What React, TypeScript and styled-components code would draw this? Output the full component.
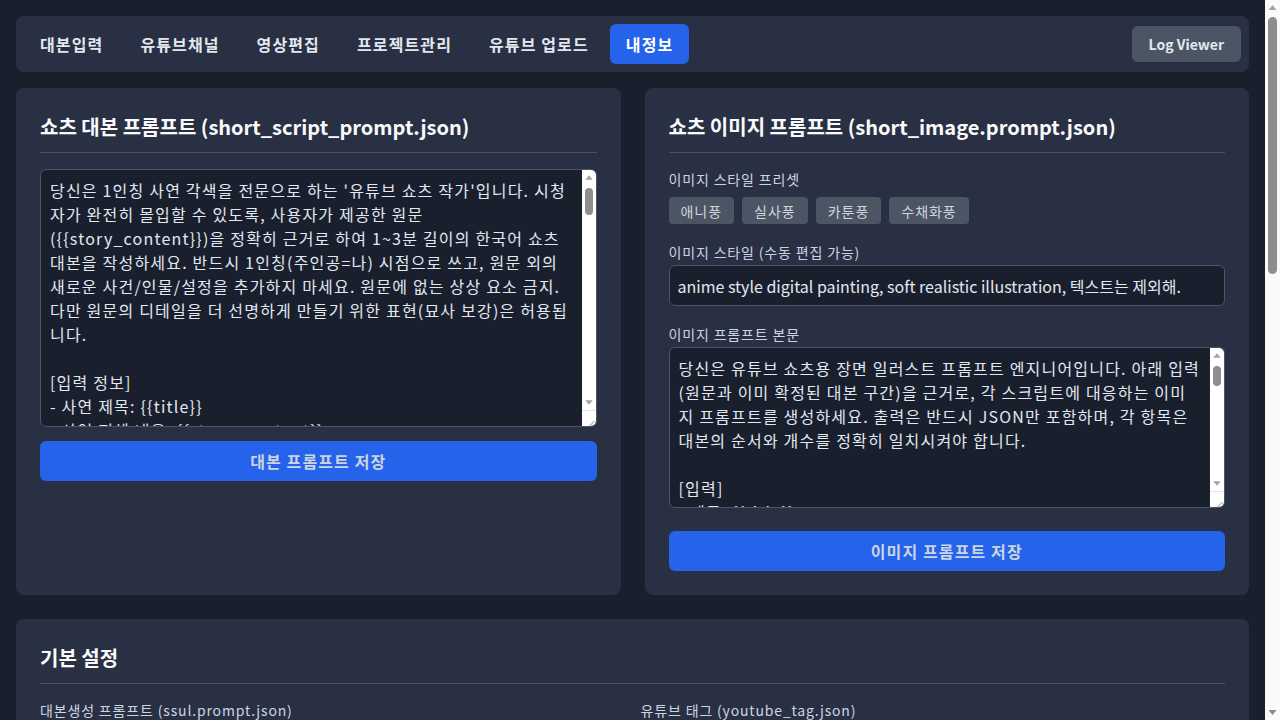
import styled, { createGlobalStyle } from 'styled-components';

const GlobalStyle = createGlobalStyle`
  html, body {
    margin: 0;
    padding: 0;
    background: #1a1f2e;
  }
  body {
    font-family: "Noto Sans CJK KR", "Noto Sans", sans-serif;
    color: #e2e8f0;
  }
  * {
    box-sizing: border-box;
  }
`;

const scriptPrompt = `당신은 1인칭 사연 각색을 전문으로 하는 '유튜브 쇼츠 작가'입니다. 시청자가 완전히 몰입할 수 있도록, 사용자가 제공한 원문({{story_content}})을 정확히 근거로 하여 1~3분 길이의 한국어 쇼츠 대본을 작성하세요. 반드시 1인칭(주인공=나) 시점으로 쓰고, 원문 외의 새로운 사건/인물/설정을 추가하지 마세요. 원문에 없는 상상 요소 금지. 다만 원문의 디테일을 더 선명하게 만들기 위한 표현(묘사 보강)은 허용됩니다.

[입력 정보]
- 사연 제목: {{title}}
- 사연 전체 내용: {{story_content}}
- 원하는 길이: {{short_duration}} (예: "3분", "짧게" 등)
- 말투: {{tone}}

[작성 규칙]
1. 첫 문장은 시청자의 호기심을 자극하는 훅으로 시작합니다.
2. 문장은 짧고 리듬감 있게 씁니다.`;

const imagePrompt = `당신은 유튜브 쇼츠용 장면 일러스트 프롬프트 엔지니어입니다. 아래 입력(원문과 이미 확정된 대본 구간)을 근거로, 각 스크립트에 대응하는 이미지 프롬프트를 생성하세요. 출력은 반드시 JSON만 포함하며, 각 항목은 대본의 순서와 개수를 정확히 일치시켜야 합니다.

[입력]
- 제목: {{title}}
- 원문: {{story_content}}
- 대본: {{scripts}}
- 스타일: {{image_style}}`;

const ssulPrompt = `당신은 사연 유튜브 채널의 대본 작가입니다. 아래 사연을 바탕으로 시청자가 끝까지 시청할 수 있는 대본을 작성하세요.

[입력 정보]
- 제목: {{title}}
- 내용: {{story_content}}`;

const tagJson = `{
  "tags": ["사연", "썰", "실화", "감동", "반전"]
}`;

const navItems = ['대본입력', '유튜브채널', '영상편집', '프로젝트관리', '유튜브 업로드', '내정보'];
const presets = ['애니풍', '실사풍', '카툰풍', '수채화풍'];

const ArrowUp = ({ color }: { color: string }) => (
  <svg width="15" height="15" viewBox="0 0 15 15">
    <polygon points="3.5,10 7.5,5 11.5,10" fill={color} />
  </svg>
);

const ArrowDown = ({ color }: { color: string }) => (
  <svg width="15" height="15" viewBox="0 0 15 15">
    <polygon points="3.5,5 7.5,10 11.5,5" fill={color} />
  </svg>
);

interface BarProps {
  thumbTop: number;
  thumbHeight: number;
  resizer?: boolean;
}

// textarea scrollbar drawn by hand, the headless browser hides native ones
const TextScrollbar = ({ thumbTop, thumbHeight, resizer }: BarProps) => (
  <Track $bg="#ffffff" $width={14}>
    <ArrowBox><ArrowUp color="#a3a3a3" /></ArrowBox>
    <Rail>
      <Thumb $top={thumbTop} $height={thumbHeight} $width={8} />
    </Rail>
    <ArrowBox><ArrowDown color="#a3a3a3" /></ArrowBox>
    {resizer && (
      <Resizer>
        <svg width="14" height="15" viewBox="0 0 14 15">
          <line x1="12.5" y1="6" x2="5" y2="13.5" stroke="#8a8a8a" strokeWidth="1" />
          <line x1="12.5" y1="10" x2="9" y2="13.5" stroke="#8a8a8a" strokeWidth="1" />
        </svg>
      </Resizer>
    )}
  </Track>
);

const PromptBox = ({ height, value, thumbHeight }: { height: number; value: string; thumbHeight: number }) => (
  <TextBox $height={height}>
    <TextArea defaultValue={value} />
    <TextScrollbar thumbTop={3} thumbHeight={thumbHeight} resizer />
  </TextBox>
);

export default function App() {
  return (
    <>
      <GlobalStyle />
      <Shell>
        <Page>
          <NavBar>
            <NavList>
              {navItems.map((item) => (
                <NavButton key={item} $active={item === '내정보'}>
                  {item}
                </NavButton>
              ))}
            </NavList>
            <LogButton>Log Viewer</LogButton>
          </NavBar>

          <TwoCol>
            <Card>
              <CardTitle>쇼츠 대본 프롬프트 (short_script_prompt.json)</CardTitle>
              <PromptBox height={258} value={scriptPrompt} thumbHeight={27} />
              <SaveButton $top={14}>대본 프롬프트 저장</SaveButton>
            </Card>

            <Card>
              <CardTitle>쇼츠 이미지 프롬프트 (short_image.prompt.json)</CardTitle>
              <Field>
                <Label $gap={8}>이미지 스타일 프리셋</Label>
                <TagRow>
                  {presets.map((p) => (
                    <Tag key={p}>{p}</Tag>
                  ))}
                </TagRow>
              </Field>
              <Field>
                <Label>이미지 스타일 (수동 편집 가능)</Label>
                <TextInput defaultValue="anime style digital painting, soft realistic illustration, 텍스트는 제외해." />
              </Field>
              <Field>
                <Label>이미지 프롬프트 본문</Label>
                <PromptBox height={161} value={imagePrompt} thumbHeight={20} />
              </Field>
              <SaveButton $top={5}>이미지 프롬프트 저장</SaveButton>
            </Card>
          </TwoCol>

          <Card>
            <CardTitle>기본 설정</CardTitle>
            <SettingsGrid>
              <div>
                <Label>대본생성 프롬프트 (ssul.prompt.json)</Label>
                <PromptBox height={420} value={ssulPrompt} thumbHeight={60} />
                <SaveButton $top={10}>대본생성 프롬프트 저장</SaveButton>
              </div>
              <div>
                <Label>유튜브 태그 (youtube_tag.json)</Label>
                <PromptBox height={420} value={tagJson} thumbHeight={60} />
                <SaveButton $top={10}>유튜브 태그 저장</SaveButton>
              </div>
              <div>
                <Label>OpenAI API Key</Label>
                <TextInput defaultValue="sk-••••••••••••••••••••••••" />
              </div>
              <div>
                <Label>출력 폴더</Label>
                <TextInput defaultValue="C:\\Users\\shorts\\output" />
              </div>
            </SettingsGrid>
            <SaveButton $top={24}>기본 설정 저장</SaveButton>
          </Card>
        </Page>

        <PageScrollbar $bg="#fafafa" $width={15}>
          <ArrowBox><ArrowUp color="#a3a3a3" /></ArrowBox>
          <Rail>
            <Thumb $top={2} $height={257} $width={9} />
          </Rail>
          <ArrowBox><ArrowDown color="#8a8a8a" /></ArrowBox>
        </PageScrollbar>
      </Shell>
    </>
  );
}

const Shell = styled.div`
  display: flex;
  align-items: flex-start;
`;

const Page = styled.div`
  flex: 1;
  min-width: 0;
  display: flex;
  flex-direction: column;
  padding: 16px 16px 460px;
`;

const Track = styled.div<{ $bg: string; $width: number }>`
  flex-shrink: 0;
  display: flex;
  flex-direction: column;
  width: ${({ $width }) => $width}px;
  background: ${({ $bg }) => $bg};
`;

const PageScrollbar = styled(Track)`
  position: sticky;
  top: 0;
  height: 100vh;
`;

const ArrowBox = styled.div`
  display: flex;
  justify-content: center;
  height: 15px;
  flex-shrink: 0;
`;

const Rail = styled.div`
  flex: 1;
  display: flex;
  flex-direction: column;
  align-items: center;
`;

const Thumb = styled.div<{ $top: number; $height: number; $width: number }>`
  margin-top: ${({ $top }) => $top}px;
  width: ${({ $width }) => $width}px;
  height: ${({ $height }) => $height}px;
  border-radius: ${({ $width }) => $width / 2}px;
  background: #8e8e8e;
`;

const Resizer = styled.div`
  height: 16px;
  border-top: 1px solid #e5e5e5;
  flex-shrink: 0;
`;

const NavBar = styled.nav`
  display: flex;
  align-items: center;
  justify-content: space-between;
  height: 56px;
  padding: 0 8px;
  background: #2a3043;
  border-radius: 8px;
`;

const NavList = styled.div`
  display: flex;
  gap: 5px;
`;

const NavButton = styled.button<{ $active?: boolean }>`
  height: 40px;
  padding: 0 16px;
  border: none;
  border-radius: 6px;
  background: ${({ $active }) => ($active ? '#2563eb' : 'transparent')};
  color: ${({ $active }) => ($active ? '#ffffff' : '#e2e8f0')};
  font-family: inherit;
  font-size: 16px;
  font-weight: 700;
  letter-spacing: 0.07em;
  cursor: pointer;
`;

const LogButton = styled.button`
  height: 36px;
  padding: 0 17px;
  border: none;
  border-radius: 6px;
  background: #4b5563;
  color: #e2e8f0;
  font-family: inherit;
  font-size: 14px;
  font-weight: 700;
`;

const TwoCol = styled.div`
  display: grid;
  grid-template-columns: 1fr 1fr;
  gap: 24px;
  margin: 16px 0 24px;
`;

const Card = styled.section`
  display: flex;
  flex-direction: column;
  padding: 24px;
  background: #2a3043;
  border-radius: 8px;
`;

const CardTitle = styled.h2`
  margin: 0 0 16px;
  padding-bottom: 10px;
  border-bottom: 1px solid #4a5366;
  font-size: 20px;
  line-height: 30px;
  font-weight: 700;
  color: #f8fafc;
`;

const Field = styled.div`
  display: flex;
  flex-direction: column;
  margin-bottom: 18px;
`;

const Label = styled.label<{ $gap?: number }>`
  display: block;
  margin-bottom: ${({ $gap }) => $gap ?? 3}px;
  font-size: 14px;
  line-height: 20px;
  letter-spacing: 0.06em;
  color: #cbd5e1;
`;

const TagRow = styled.div`
  display: flex;
  gap: 8px;
`;

const Tag = styled.button`
  height: 27px;
  padding: 0 12px;
  border: none;
  border-radius: 4px;
  background: #4b5563;
  color: #d1d5db;
  font-family: inherit;
  font-size: 14px;
  letter-spacing: 0.07em;
`;

const TextInput = styled.input`
  width: 100%;
  height: 41px;
  padding: 0 8px;
  border: 1px solid #4b5563;
  border-radius: 6px;
  background: #1a1f2e;
  color: #e2e8f0;
  font-family: inherit;
  font-size: 16px;
  outline: none;
`;

const TextBox = styled.div<{ $height: number }>`
  display: flex;
  height: ${({ $height }) => $height}px;
  border: 1px solid #4b5563;
  border-radius: 6px;
  background: #1a1f2e;
  overflow: hidden;
`;

const TextArea = styled.textarea`
  flex: 1;
  min-width: 0;
  height: 100%;
  padding: 8px 9px;
  border: none;
  background: transparent;
  color: #e2e8f0;
  font-family: inherit;
  font-size: 16px;
  line-height: 24px;
  letter-spacing: 0.075em;
  resize: none;
  outline: none;
  overflow: hidden;
`;

const SaveButton = styled.button<{ $top: number }>`
  width: 100%;
  height: 40px;
  margin-top: ${({ $top }) => $top}px;
  border: none;
  border-radius: 6px;
  background: #2563eb;
  color: #cbd5e1;
  font-family: inherit;
  font-size: 16px;
  font-weight: 700;
  letter-spacing: 0.07em;
`;

const SettingsGrid = styled.div`
  display: grid;
  grid-template-columns: 1fr 1fr;
  gap: 24px 16px;
`;
